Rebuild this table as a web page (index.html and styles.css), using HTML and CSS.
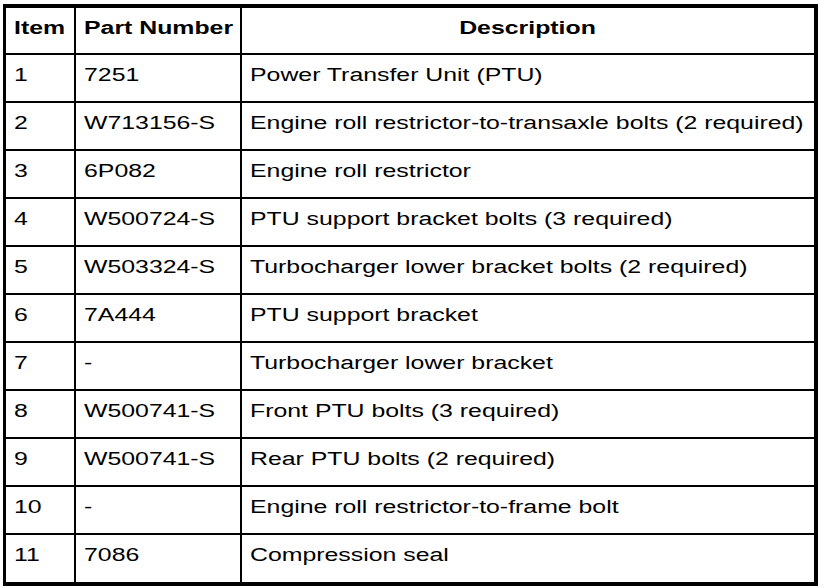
FILE: index.html
```html
<!DOCTYPE html>
<html>
<head>
<meta charset="utf-8">
<link rel="stylesheet" href="styles.css">
</head>
<body>
<div class="frame">
<table class="parts">
<colgroup><col class="c-item"><col class="c-part"><col class="c-desc"></colgroup>
<thead>
<tr class="head"><th class="l"><span class="t">Item</span></th><th class="l"><span class="t">Part Number</span></th><th><span class="t tc">Description</span></th></tr>
</thead>
<tbody>
<tr><td><span class="t">1</span></td><td><span class="t">7251</span></td><td><span class="t">Power Transfer Unit (PTU)</span></td></tr>
<tr><td><span class="t">2</span></td><td><span class="t">W713156-S</span></td><td><span class="t">Engine roll restrictor-to-transaxle bolts (2 required)</span></td></tr>
<tr><td><span class="t">3</span></td><td><span class="t">6P082</span></td><td><span class="t">Engine roll restrictor</span></td></tr>
<tr><td><span class="t">4</span></td><td><span class="t">W500724-S</span></td><td><span class="t">PTU support bracket bolts (3 required)</span></td></tr>
<tr><td><span class="t">5</span></td><td><span class="t">W503324-S</span></td><td><span class="t">Turbocharger lower bracket bolts (2 required)</span></td></tr>
<tr><td><span class="t">6</span></td><td><span class="t">7A444</span></td><td><span class="t">PTU support bracket</span></td></tr>
<tr><td><span class="t">7</span></td><td><span class="t">-</span></td><td><span class="t">Turbocharger lower bracket</span></td></tr>
<tr><td><span class="t">8</span></td><td><span class="t">W500741-S</span></td><td><span class="t">Front PTU bolts (3 required)</span></td></tr>
<tr><td><span class="t">9</span></td><td><span class="t">W500741-S</span></td><td><span class="t">Rear PTU bolts (2 required)</span></td></tr>
<tr><td><span class="t">10</span></td><td><span class="t">-</span></td><td><span class="t">Engine roll restrictor-to-frame bolt</span></td></tr>
<tr><td><span class="t">11</span></td><td><span class="t">7086</span></td><td><span class="t">Compression seal</span></td></tr>
</tbody>
</table>
</div>
</body>
</html>
```
FILE: styles.css
```css
html, body {
  margin: 0;
  padding: 0;
  background: #fff;
}
body {
  font-family: "Liberation Sans", Arial, sans-serif;
  color: #000;
}
.frame {
  margin: 4px 0 0 3px;
  width: 808px;
  border: 4px solid #000;
  border-left-width: 3px;
}
.parts {
  width: 100%;
  border-collapse: collapse;
  border-style: hidden;
  table-layout: fixed;
  font-size: 18px;
}
.c-item { width: 69px; }
.c-part { width: 166px; }
.parts th, .parts td {
  border: 2px solid #000;
  padding: 10px 8px 0 8px;
  vertical-align: top;
  text-align: left;
  white-space: nowrap;
}
.parts th {
  font-weight: bold;
  text-align: center;
}
.parts th.l { text-align: left; }
.parts tr.head { height: 46px; }
.parts tbody tr { height: 48px; }
.t {
  display: inline-block;
  transform: scaleX(1.38);
  transform-origin: left center;
}
.t.tc { transform-origin: center center; }
```
